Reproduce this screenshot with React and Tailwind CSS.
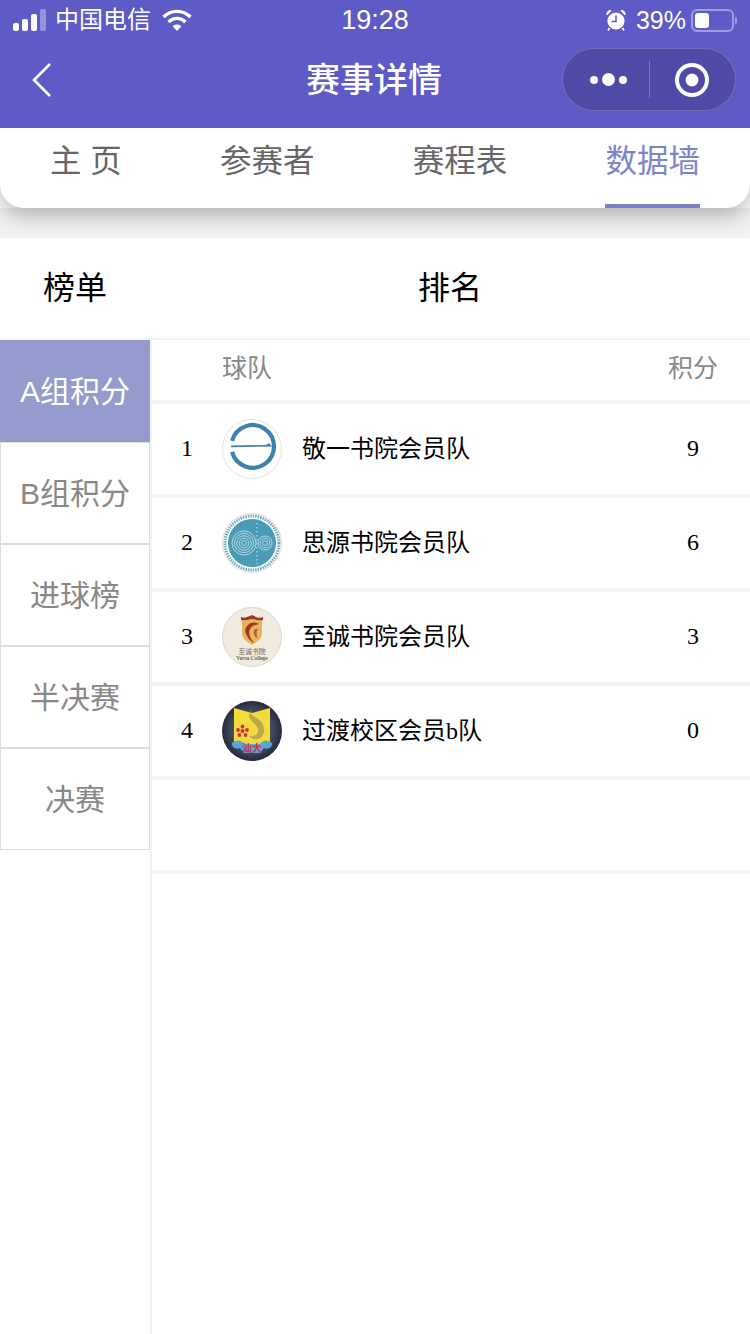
import React from 'react';

const SERIF = 'font-["Liberation_Serif","Noto_Sans_CJK_SC",serif]';

const teams = [
  { rank: 1, name: '敬一书院会员队', score: 9, logo: 'jingyi' },
  { rank: 2, name: '思源书院会员队', score: 6, logo: 'siyuan' },
  { rank: 3, name: '至诚书院会员队', score: 3, logo: 'zhicheng' },
  { rank: 4, name: '过渡校区会员b队', score: 0, logo: 'stu' },
];

const boards = ['B组积分', '进球榜', '半决赛', '决赛'];

const StatusBar = () => (
  <div className="flex h-10 items-center justify-between pl-[13px] pr-[13px] text-white">
    <div className="flex flex-1 items-center">
      <svg width="34" height="22" viewBox="0 0 34 22">
        <rect x="0" y="14" width="6" height="8" rx="2" fill="#fff" />
        <rect x="9" y="10" width="6" height="12" rx="2" fill="#fff" />
        <rect x="18" y="5" width="6" height="17" rx="2" fill="#fff" />
        <rect x="27" y="0" width="6" height="22" rx="2" fill="#fff" fillOpacity="0.35" />
      </svg>
      <span className="ml-[8px] text-[24px] leading-none">中国电信</span>
      <svg className="ml-[11px]" width="30" height="22" viewBox="0 0 30 22" fill="none" stroke="#fff" strokeWidth="3.4">
        <path d="M1.5 8 C9 0.5 21 0.5 28.5 8" />
        <path d="M6.5 13 C11.5 8.2 18.5 8.2 23.5 13" />
        <path d="M15 22 L10.5 17.2 C13 15 17 15 19.5 17.2 Z" fill="#fff" stroke="none" />
      </svg>
    </div>
    <span className="text-[27px] font-medium leading-none">19:28</span>
    <div className="flex flex-1 items-center justify-end">
      <svg width="20" height="22" viewBox="0 0 20 22">
        <circle cx="10" cy="12" r="8.6" fill="#fff" />
        <path d="M10 6.5 V12.5 H5.5" fill="none" stroke="#5e5ac6" strokeWidth="1.6" />
        <path d="M1 6 L5 1.6 A3.4 3.4 0 0 0 1 6 Z M19 6 L15 1.6 A3.4 3.4 0 0 1 19 6 Z" fill="#fff" stroke="#fff" />
        <path d="M3.5 19 L2 21.5 M16.5 19 L18 21.5" stroke="#fff" strokeWidth="1.6" />
      </svg>
      <span className="ml-[10px] text-[25px] leading-none">39%</span>
      <div className="ml-[5px] flex h-[23px] w-[43px] items-center rounded-[6px] border-2 border-white/40 p-[2px]">
        <div className="h-full w-[14px] rounded-[3px] bg-white" />
      </div>
      <div className="ml-[1px] h-[7px] w-[2px] rounded-r-sm bg-white/40" />
    </div>
  </div>
);

const NavBar = () => (
  <div className="flex h-[88px] items-center justify-between pl-[30px] pr-[14px]">
    <div className="w-[162px] pb-[8px]">
      <svg width="24" height="36" viewBox="0 0 24 36" fill="none" stroke="#fff" strokeWidth="2.6">
        <path d="M20 2 L4 18 L20 34" />
      </svg>
    </div>
    <h1 className="pb-[8px] pr-[6px] text-[34px] font-medium leading-none text-white">赛事详情</h1>
    <div className="mb-[9px] flex h-[63px] w-[174px] items-center rounded-full border border-white/20 bg-[#4f4aa6]">
      <div className="flex flex-1 items-center justify-center gap-[4px] pl-[4px]">
        <span className="h-[8px] w-[8px] rounded-full bg-white" />
        <span className="h-[13px] w-[13px] rounded-full bg-white" />
        <span className="h-[8px] w-[8px] rounded-full bg-white" />
      </div>
      <div className="h-[37px] w-px bg-white/25" />
      <div className="flex w-[85px] items-center justify-center pr-[1px]">
        <svg width="36" height="36" viewBox="0 0 36 36">
          <circle cx="18" cy="18" r="15" fill="none" stroke="#fff" strokeWidth="4" />
          <circle cx="18" cy="18" r="6.4" fill="#fff" />
        </svg>
      </div>
    </div>
  </div>
);

const Tabs = () => (
  <div className="relative z-10 flex h-20 justify-between rounded-b-[24px] bg-white pl-[50px] pr-[50px] shadow-[0_8px_22px_rgba(0,0,0,0.28)]">
    <span className="pt-[14px] text-[31.5px] leading-[38px] text-[#666]">主 页</span>
    <span className="pt-[14px] text-[31.5px] leading-[38px] text-[#666]">参赛者</span>
    <span className="pt-[14px] text-[31.5px] leading-[38px] text-[#666]">赛程表</span>
    <span className="h-20 border-b-4 border-[#7a80c8] pt-[14px] text-[31.5px] leading-[38px] text-[#7b84cc]">数据墙</span>
  </div>
);

const Logo = ({ type }) => {
  if (type === 'jingyi') {
    return (
      <svg width="60" height="60" viewBox="0 0 60 60">
        <circle cx="30" cy="30" r="29.5" fill="#fff" stroke="#e2e2e2" />
        <path d="M10.1 21.9 A21.3 21.3 0 1 1 10.1 32.9" fill="none" stroke="#3f81ae" strokeWidth="4.2" />
        <path d="M9 26.4 L44 26 L47 24 L50 27.4 L9 28.2 Z" fill="#3f81ae" />
      </svg>
    );
  }
  if (type === 'siyuan') {
    return (
      <svg width="60" height="60" viewBox="0 0 60 60">
        <circle cx="30" cy="30" r="29.5" fill="#fff" stroke="#dcdcdc" />
        <circle cx="30" cy="30" r="27" fill="none" stroke="#6fa9bb" strokeWidth="3" strokeDasharray="1.5 1" />
        <circle cx="30" cy="30" r="24" fill="#4a9cb6" />
        <g fill="none" stroke="#cfe6ec" strokeWidth="0.8">
          <circle cx="22" cy="30" r="12" />
          <circle cx="22" cy="30" r="9.6" />
          <circle cx="22" cy="30" r="7.2" />
          <circle cx="22" cy="30" r="4.8" />
          <circle cx="22" cy="30" r="2.4" />
          <circle cx="43" cy="30" r="7" />
          <circle cx="43" cy="30" r="4.8" />
          <circle cx="43" cy="30" r="2.4" />
        </g>
        <path d="M35 10 V51" stroke="#a9d2dd" strokeWidth="1.4" strokeDasharray="1.5 2.5" />
      </svg>
    );
  }
  if (type === 'zhicheng') {
    return (
      <svg width="60" height="60" viewBox="0 0 60 60">
        <circle cx="30" cy="30" r="29.5" fill="#f2ebe0" stroke="#ddd6ca" />
        <path d="M20 11 H40 V26 C40 33 34 35 30 38 C26 35 20 33 20 26 Z" fill="#e2b65a" />
        <path d="M19 10 C24 12 27 9 30 8 C33 9 36 12 41 10 L41 13 C36 14 33 12 30 12 C27 12 24 14 19 13 Z" fill="#a5322a" />
        <path d="M37 17 C29 12 21 20 24 27 C26 32 30 35 32 36 C28 31 26 26 28 22 C30 18 34 18 37 17 Z" fill="#a5322a" />
        <path d="M36 22 C33 21 31 24 32 27 C33 30 35 31 36 31 C34 28 34 25 36 22 Z" fill="#c4552c" />
        <text x="30" y="47" textAnchor="middle" fontSize="6.8" fill="#6d6558" fontFamily="Noto Sans CJK SC, sans-serif">至诚书院</text>
        <text x="30" y="53" textAnchor="middle" fontSize="5.4" fontWeight="700" fill="#6d6558" fontFamily="Liberation Serif, serif">Versa College</text>
      </svg>
    );
  }
  return (
    <svg width="60" height="60" viewBox="0 0 60 60">
      <defs>
        <radialGradient id="stuBg" cx="0.5" cy="0.5" r="0.55">
          <stop offset="0" stopColor="#6b7689" />
          <stop offset="0.7" stopColor="#3a4257" />
          <stop offset="1" stopColor="#1b2130" />
        </radialGradient>
      </defs>
      <circle cx="30" cy="30" r="30" fill="url(#stuBg)" />
      <path d="M12 7 L30 12 L48 7 V42 L30 50 L12 42 Z" fill="#f3dc3a" />
      <path d="M32 5 C28 9 27 12 30 14 C35 17 44 22 42 31 C40 40 31 40 27 35 C33 36 37 33 36 28 C35 23 26 20 27 13 C28 9 30 7 32 5 Z" fill="#b9a94c" />
      <circle cx="20.5" cy="30" r="2" fill="#c5304a" />
      <circle cx="20.5" cy="25.5" r="1.9" fill="#c5304a" />
      <circle cx="16" cy="29" r="1.9" fill="#c5304a" />
      <circle cx="25" cy="29" r="1.9" fill="#c5304a" />
      <circle cx="17.5" cy="34" r="1.9" fill="#c5304a" />
      <circle cx="23.5" cy="34" r="1.9" fill="#c5304a" />
      <path d="M10 42 C15 38 20 39 22 43 H38 C40 39 45 38 50 42 C51 46 46 49 42 47 L38 52 H22 L18 47 C14 49 9 46 10 42 Z" fill="#5aa6d6" />
      <text x="30" y="51" textAnchor="middle" fontSize="10" fontWeight="700" fill="#c5304a" fontFamily="Noto Sans CJK SC, sans-serif">汕大</text>
    </svg>
  );
};

const Sidebar = () => (
  <div className="w-[152px] shrink-0 border-r-2 border-[#f2f2f2]">
    <div className="flex h-[102px] items-center justify-center bg-[#959bcd] text-[30px] text-white">A组积分</div>
    {boards.map((b) => (
      <div key={b} className="flex h-[102px] items-center justify-center border border-[#ddd] text-[30px] text-[#888]">
        {b}
      </div>
    ))}
  </div>
);

const Standings = () => (
  <div className="flex-1">
    <div className="flex h-[64px] items-center border-b-4 border-[#f3f3f3] pb-[2px] text-[25px] text-[#888]">
      <span className="ml-[70px] flex-1">球队</span>
      <span className="w-[114px] text-center">积分</span>
    </div>
    {teams.map((t) => (
      <div key={t.rank} className={`flex h-[94px] items-center border-b-4 border-[#f3f3f3] text-[24px] text-black ${SERIF}`}>
        <span className="mb-[2px] w-[70px] text-center">{t.rank}</span>
        <Logo type={t.logo} />
        <span className="ml-[20px] flex-1">{t.name}</span>
        <span className="mb-[2px] w-[114px] text-center">{t.score}</span>
      </div>
    ))}
    <div className="h-[94px] border-b-4 border-[#f3f3f3]" />
  </div>
);

export default function App() {
  return (
    <div className='h-[1334px] w-[750px] overflow-hidden bg-white font-["Liberation_Sans","Noto_Sans_CJK_SC",sans-serif]'>
      <div className="relative z-20 bg-[#5e5ac6]">
        <StatusBar />
        <NavBar />
      </div>
      <Tabs />
      <div className="h-[30px] bg-[#f3f3f3]" />
      <div className="flex h-[102px] items-center border-b-2 border-[#f4f4f4] text-[32px] text-black">
        <span className="w-[150px] text-center">榜单</span>
        <span className="flex-1 text-center">排名</span>
      </div>
      <div className="flex h-[994px]">
        <Sidebar />
        <Standings />
      </div>
    </div>
  );
}
